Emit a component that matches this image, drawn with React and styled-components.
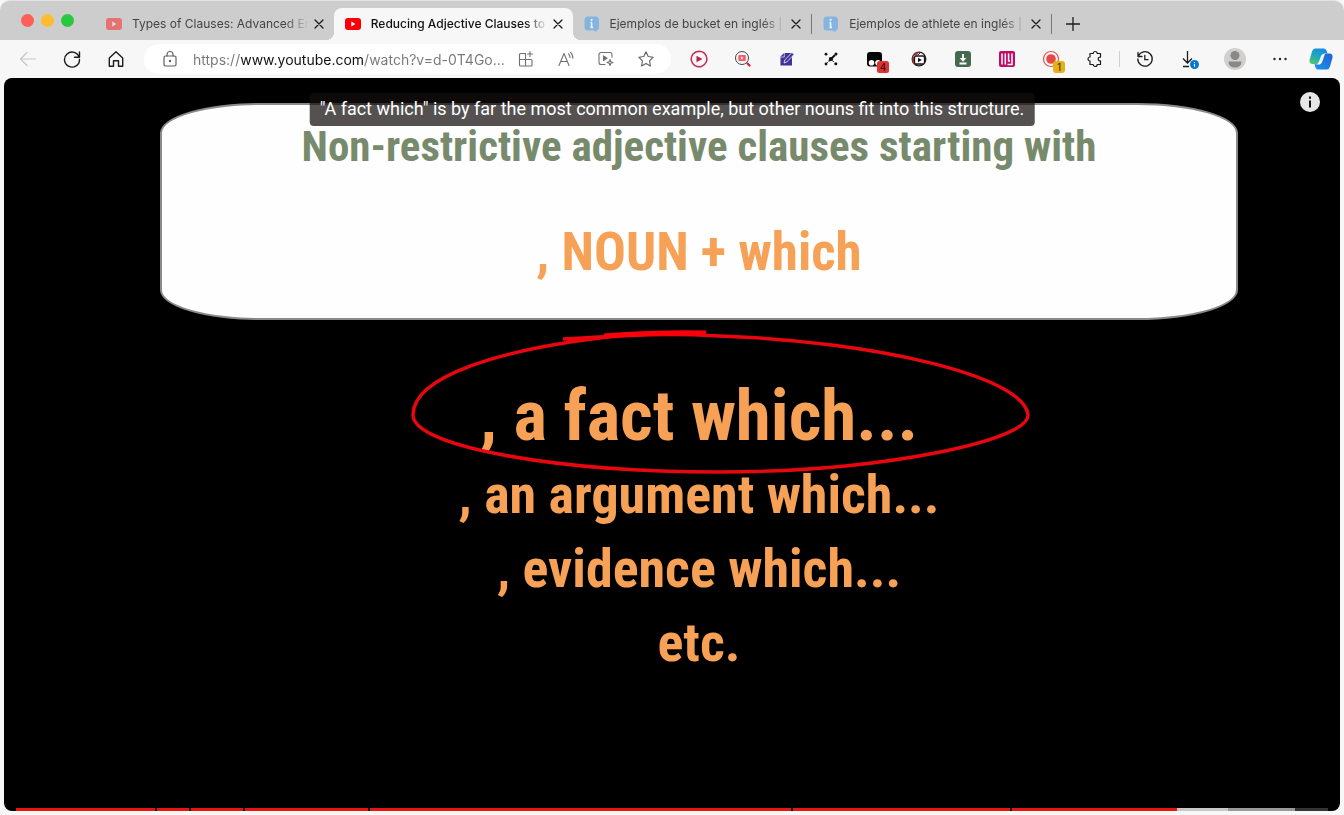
import React from "react";
import styled, { createGlobalStyle, css } from "styled-components";

const GlobalStyle = createGlobalStyle`
  * { box-sizing: border-box; }
  body { margin: 0; background: #f7f7f7; font-family: Inter, "Liberation Sans", sans-serif; }
  button, input { font: inherit; color: inherit; }
`;

const Window = styled.div`
  min-height: 100vh;
  display: flex;
  flex-direction: column;
  background: #f7f7f7;
`;

/* ---------- tab strip ---------- */

const TabStrip = styled.header`
  display: flex;
  align-items: flex-end;
  height: 40px;
  background: #cdcdcd;
  border-top: 1px solid #e4e4e4;
  border-radius: 10px 10px 0 0;
`;

const WindowControls = styled.div`
  display: flex;
  align-self: flex-start;
  gap: 7px;
  width: 95px;
  flex: none;
  padding: 13px 0 0 21px;
`;

const WindowControl = styled.button`
  width: 13px;
  height: 13px;
  padding: 0;
  border: 0;
  border-radius: 50%;
  background: ${(p) => p.$color};
`;

const Tabs = styled.nav`
  display: flex;
  flex: 0 1 957px;
  min-width: 0;
`;

const Tab = styled.div`
  position: relative;
  display: flex;
  align-items: center;
  flex: 1 1 0;
  min-width: 0;
  height: 32px;
  padding: 0 5px 0 11px;
  color: #444;
  ${(p) => p.$divided && css`border-right: 1px solid #777; height: 20px; margin: 6px 0;`}
  ${(p) =>
    p.$active &&
    css`
      color: #111;
      background: #f7f7f7;
      border-radius: 8px 8px 0 0;
      &::before, &::after {
        content: "";
        position: absolute;
        bottom: 0;
        width: 8px;
        height: 8px;
      }
      &::before {
        left: -8px;
        background: radial-gradient(circle at 0 0, #cdcdcd 8px, #f7f7f7 8px);
      }
      &::after {
        right: -8px;
        background: radial-gradient(circle at 100% 0, #cdcdcd 8px, #f7f7f7 8px);
      }
    `}
`;

const TabLink = styled.a`
  display: flex;
  align-items: center;
  flex: 1;
  min-width: 0;
  gap: 10px;
  color: inherit;
  text-decoration: none;
  svg { flex: none; }
`;

const TabTitle = styled.span`
  flex: 1;
  min-width: 0;
  overflow: hidden;
  white-space: nowrap;
  font-size: 12px;
  font-weight: ${(p) => (p.$active ? 500 : 400)};
  line-height: 20px;
  mask-image: linear-gradient(to right, #000 calc(100% - 24px), transparent);
`;

const IconButton = styled.button`
  display: flex;
  align-items: center;
  justify-content: center;
  flex: none;
  width: ${(p) => p.$width}px;
  height: 32px;
  padding: 0;
  border: 0;
  background: none;
`;

/* ---------- toolbar ---------- */

const Toolbar = styled.div`
  display: flex;
  align-items: center;
  height: 38px;
  padding: 0 4px 0 6px;
`;

const AddressBar = styled.div`
  display: flex;
  align-items: center;
  flex: 1;
  min-width: 0;
  height: 30px;
  margin: 0 6px;
  padding: 0 5px 0 14px;
  border-radius: 15px;
  background: #fff;
`;

const Address = styled.input`
  flex: 1;
  min-width: 0;
  height: 24px;
  margin-left: 11px;
  padding: 0;
  border: 0;
  outline: 0;
  font-size: 14px;
  color: transparent;
  background: linear-gradient(to right, #777 47px, #111 47px, #111 170px, #777 170px);
  background-clip: text;
  -webkit-background-clip: text;
`;

const Divider = styled.span`
  width: 1px;
  height: 16px;
  margin: 0 2px;
  background: #d0d0d0;
`;

/* ---------- video ---------- */

const Player = styled.main`
  position: relative;
  display: flex;
  flex-direction: column;
  flex: 1;
  margin: 0 4px 4px;
  overflow: hidden;
  border-radius: 8px;
  background: #000;
`;

const Caption = styled.p`
  position: absolute;
  z-index: 1;
  top: 15px;
  left: 50%;
  transform: translateX(-50%);
  margin: 0;
  padding: 0 10px 1px;
  border-radius: 4px;
  background: rgba(20, 14, 14, 0.72);
  color: #fff;
  font: 18px/32px Roboto, sans-serif;
  white-space: nowrap;
`;

const InfoButton = styled.button`
  position: absolute;
  top: 14px;
  right: 20px;
  width: 20px;
  height: 20px;
  padding: 0;
  border: 0;
  background: none;
`;

const Slide = styled.section`
  flex: 1;
  padding: 25px 102px 0 156px;
  text-align: center;
  font-family: "Roboto Condensed", Roboto, sans-serif;
  font-weight: 700;
  color: #f6a155;
`;

const Card = styled.div`
  padding: 11px 0 36px;
  border: 2px solid #8a8a8a;
  border-radius: 100px / 30px;
  background: #fefefe;
`;

const CardTitle = styled.h1`
  margin: 0 0 46px;
  color: #788a6c;
  font-size: 43px;
  line-height: 60px;
  white-space: nowrap;
`;

const Pattern = styled.p`
  margin: 0;
  font-size: 53px;
  line-height: 60px;
`;

const Examples = styled.ul`
  margin: 54px 0 0;
  padding: 0;
  list-style: none;
`;

const Example = styled.li`
  position: relative;
  font-size: ${(p) => (p.$large ? 71 : 54)}px;
  line-height: ${(p) => (p.$large ? 84 : 74)}px;
  white-space: nowrap;
`;

const Circle = styled.svg`
  position: absolute;
  top: -47px;
  left: calc(50% - 290px);
`;

const Progress = styled.div`
  display: flex;
  gap: 2px;
  height: 3px;
  margin: 0 12px;
`;

const Chapter = styled.span`
  display: flex;
  flex: ${(p) => p.$length} 1 0;
  background: #e8150f;
`;

const Part = styled.span`
  flex: ${(p) => p.$length} 1 0;
  background: ${(p) => p.$color};
`;

/* ---------- icons ---------- */

const Line = ({ size = 20, box = 20, width = 1.2, color = "#1c1c1c", children }) => (
  <svg width={size} height={size} viewBox={`0 0 ${box} ${box}`} fill="none" stroke={color}
    strokeWidth={width} strokeLinecap="round" strokeLinejoin="round" aria-hidden="true">
    {children}
  </svg>
);

const YouTubeIcon = ({ faded }) => (
  <svg width="16" height="16" viewBox="0 0 16 16" aria-hidden="true">
    <rect y="2" width="16" height="12" rx="3" fill={faded ? "#e57373" : "#fb0007"} />
    <path d="M6.3 5.6v4.8L10.4 8z" fill={faded ? "#f5dede" : "#fff"} />
  </svg>
);

const InfoBubbleIcon = () => (
  <svg width="16" height="16" viewBox="0 0 16 16" aria-hidden="true">
    <path d="M4 .5h7q4 0 4 4v6.500q0 3-2.500 3.500v1.500l-3-1.500H4q-3.500 0-3.500-3.500V4.500q0-4 3.500-4z" fill="#85b4df" />
    <path d="M7.600 6.500v5M6.500 6.500h1.200M6.500 11.500h2.600" stroke="#eaf4ff" strokeWidth="1.600" />
    <circle cx="7.600" cy="3.800" r="1.100" fill="#eaf4ff" />
  </svg>
);

const CloseIcon = () => (
  <Line size={10} box={10} width={1.3}><path d="m1 1 8 8M9 1 1 9" /></Line>
);

const extensions = [
  ["Play", (
    <svg width="18" height="18" viewBox="0 0 18 18">
      <path d="M9 1.200a7.800 7.800 0 1 0 7 4.300M9 1.200a7.800 7.800 0 0 1 7.400 5.400" fill="none" stroke="#c22956" strokeWidth="1.500" />
      <path d="M6.500 5.800v6.400L12.500 9z" fill="#c01f50" />
    </svg>
  )],
  ["Video search", (
    <svg width="18" height="18" viewBox="0 0 18 18">
      <circle cx="8" cy="8" r="6.500" fill="#fdf5f5" stroke="#3b4650" strokeWidth="1" />
      <rect x="4.300" y="5" width="7.500" height="6" rx="1" fill="#f0626b" />
      <path d="M7 6.500v3L9.500 8z" fill="#fff" />
      <path d="m13.500 13.500 2 2" stroke="#d42a3c" strokeWidth="2.400" strokeLinecap="round" />
    </svg>
  )],
  ["Notes", (
    <svg width="16" height="16" viewBox="0 0 16 16">
      <path d="M1.500 5.500 5 2h8v12.500H1.500z" fill="#3f3398" />
      <path d="m5 12 .8-3L13 1.500 15 3.500 7.800 11z" fill="#3f3398" stroke="#f7f7f7" strokeWidth=".8" />
      <path d="M1.500 6H5.300V2" stroke="#f7f7f7" fill="none" strokeWidth=".7" />
    </svg>
  )],
  ["Network", (
    <svg width="14" height="14" viewBox="0 0 14 14" fill="#111" stroke="#111">
      <path d="m5 9 6-6" strokeWidth="2" />
      <path d="m2.500 11.500 2-2M5 5.500l5 4.500" strokeWidth=".8" />
      <g stroke="none"><circle cx="2" cy="2.200" r="1.400" /><circle cx="12" cy="2" r="1.500" /><circle cx="7" cy="7" r="2" /><circle cx="2" cy="12" r="1.400" /><circle cx="11.800" cy="11.800" r="1.500" /></g>
    </svg>
  )],
  ["Scripts", (
    <svg width="28" height="28" viewBox="0 0 28 28">
      <rect x="6" y="7" width="15" height="14.500" rx="3" fill="#050505" />
      <circle cx="10.500" cy="17.700" r="2.800" fill="#fff" /><circle cx="17" cy="17.700" r="2.800" fill="#fff" />
      <rect x="16" y="16" width="12" height="12" rx="2.500" fill="#db3433" />
      <text x="22" y="25.800" textAnchor="middle" fontSize="10" fill="#300">4</text>
    </svg>
  )],
  ["Video recorder", (
    <svg width="16" height="16" viewBox="0 0 16 16">
      <circle cx="8" cy="8" r="6.800" fill="#fff" stroke="#222" strokeWidth="1.300" />
      <path d="M2 5q3-4 6-4L6 4.500H3zM1.500 6v6l2 1V6z" fill="#c53041" />
      <rect x="3.500" y="5" width="10" height="8" rx="1.500" fill="#fff" stroke="#171717" strokeWidth="1.300" />
      <path d="M7 6.800v4.500l3.800-2.300z" fill="#111" /><path d="m7 4 3-3" stroke="#222" />
    </svg>
  )],
  ["Save", (
    <svg width="16" height="16" viewBox="0 0 16 16">
      <rect width="16" height="16" rx="3" fill="#46694d" />
      <path d="M8 3v6M4.500 12.500h7" stroke="#fff" strokeWidth="1.800" /><path d="M4.700 7h6.600L8 10.800z" fill="#fff" />
    </svg>
  )],
  ["Reader", (
    <svg width="16" height="16" viewBox="0 0 16 16">
      <rect width="16" height="16" rx="2" fill="#c00b68" />
      <path d="M3 2.500v11M6.300 2.500v11M9.600 2.500v7.500h1.500M13 2.500v11H8.500" fill="none" stroke="#fff" strokeWidth="1.500" />
    </svg>
  )],
  ["Recorder", (
    <svg width="28" height="28" viewBox="0 0 28 28">
      <circle cx="14" cy="14" r="7.500" fill="none" stroke="#e35353" strokeWidth="1.200" />
      <circle cx="14" cy="14" r="4.800" fill="#e84747" />
      <rect x="16" y="16" width="12" height="12" rx="3" fill="#e5b116" />
      <text x="22" y="25.800" textAnchor="middle" fontSize="10" fill="#332600">1</text>
    </svg>
  )],
  ["Extensions", (
    <Line size={18} box={18}>
      <path d="M5 3.500h2.200a2 2 0 0 1 4 0h3.300v3.700a1.900 1.900 0 1 0 0 3.700v3.600h-3.300a2 2 0 0 1-4 0H4v-3.500a2 2 0 0 1 0-4V3.500z" />
    </Line>
  )],
];

const pageActions = [
  ["Add to apps", (
    <Line size={18} box={18} width={1.1} color="#707070">
      <path d="M8 3.500H3.500a1 1 0 0 0-1 1V15a1 1 0 0 0 1 1H14a1 1 0 0 0 1-1v-4.500a1 1 0 0 0-1-1H2.500M8.500 3.500V16M13 1.500v5M10.500 4h5" />
    </Line>
  )],
  ["Read aloud", (
    <Line size={18} box={18} width={1.1} color="#707070">
      <path d="m2 15.500 5-12 5 12M3.700 11.500h6.600M11.500 3.800q1.500 1.500 1.500 3.700M13.500 2.300q2.500 2.200 2.300 6" />
    </Line>
  )],
  ["Enhance video", (
    <Line size={18} box={18} width={1.1} color="#707070">
      <path d="M8 14.500H4a2 2 0 0 1-2-2v-8a2 2 0 0 1 2-2h9a2 2 0 0 1 2 2V7M13 9.500l.8 2.200 2.200.8-2.200.8-.8 2.200-.8-2.200-2.200-.8 2.200-.8z" />
      <path d="M6.500 6v4.500l3.500-2.200z" fill="#707070" />
    </Line>
  )],
  ["Favorite", (
    <Line size={18} box={18} width={1.1} color="#606060">
      <path d="m9 1.800 2.200 4.700 5 .7-3.600 3.600.8 5.200L9 13.500 4.600 16l.8-5.200L1.800 7.200l5-.7z" />
    </Line>
  )],
];

const browserActions = [
  ["History", (
    <Line size={18} box={18} width={1.3}><path d="M2 2.500v4h4M2.300 6.300A7.200 7.200 0 1 1 1.800 9M8.800 5.500v4.200h3.200" /></Line>
  )],
  ["Downloads", (
    <svg width="22" height="22" viewBox="0 0 22 22">
      <path d="M8.500 3v12M4 10.500l4.500 4.500 4.500-4.500M4 18.500h6" fill="none" stroke="#1c1c1c" strokeWidth="1.300" />
      <circle cx="15.500" cy="16.500" r="4.500" fill="#0877d1" />
      <path d="M15.500 15.800v3M15.500 14v1" stroke="#fff" strokeWidth="1.100" />
    </svg>
  )],
  ["Profile", (
    <svg width="22" height="22" viewBox="0 0 22 22">
      <circle cx="11" cy="11" r="11" fill="#d2d0ce" /><circle cx="11" cy="7.500" r="4.500" fill="#8a8886" />
      <path d="M4.500 13.500h13q0 6-6.500 6t-6.500-6z" fill="#8a8886" />
    </svg>
  )],
  ["Settings", (
    <svg width="14" height="4" viewBox="0 0 14 4" fill="#222"><circle cx="1.500" cy="2" r="1.200" /><circle cx="7" cy="2" r="1.200" /><circle cx="12.500" cy="2" r="1.200" /></svg>
  )],
];

const CopilotIcon = () => (
  <svg width="24" height="22" viewBox="0 0 24 22" aria-hidden="true">
    <defs>
      <linearGradient id="copilotLeft" x1="0" y1="1" x2=".5" y2="0"><stop offset="0" stopColor="#69c75b" /><stop offset=".45" stopColor="#20b0b0" /><stop offset="1" stopColor="#1690df" /></linearGradient>
      <linearGradient id="copilotRight" x1="0" y1="1" x2="1" y2="0"><stop offset="0" stopColor="#1596ed" /><stop offset="1" stopColor="#2460cf" /></linearGradient>
    </defs>
    <path d="M6 .5h9q2 0 2.700 2.500l.8 2.500q-4-1-5.200 2.500L11.500 13q-1 3-3.500 3H3q-3-.5-2.500-4L3 3.500Q4 .5 6 .5z" fill="url(#copilotLeft)" />
    <path d="M18 21.500H9q-2 0-2.700-2.500L5.500 16q4.500.8 5.700-2.500L13 8.500q1-3 3.500-3H21q3 .5 2.500 4L21 18.500q-1 3-3 3z" fill="url(#copilotRight)" />
    <path d="M16.500 5.500q-3.500-.5-4.500 2.500l-2 5.500q-.8 2.500-3 2.800 3 .7 4.500-.2 1.200-.8 1.800-2.600l1.700-5q.6-2.400 1.500-3z" fill="#f7f7f7" />
  </svg>
);

const tabs = [
  { title: "Types of Clauses: Advanced En", icon: <YouTubeIcon faded /> },
  { title: "Reducing Adjective Clauses to", icon: <YouTubeIcon />, active: true },
  { title: "Ejemplos de bucket en inglés |", icon: <InfoBubbleIcon />, divided: true },
  { title: "Ejemplos de athlete en inglés |", icon: <InfoBubbleIcon />, divided: true },
];

const watchedChapters = [139, 32, 52, 123, 421, 217];

export default function App() {
  return (
    <Window>
      <GlobalStyle />
      <TabStrip>
        <WindowControls>
          <WindowControl $color="#ff5f57" aria-label="Close window" />
          <WindowControl $color="#febc2e" aria-label="Minimize window" />
          <WindowControl $color="#28c840" aria-label="Zoom window" />
        </WindowControls>
        <Tabs aria-label="Tabs">
          {tabs.map((tab) => (
            <Tab key={tab.title} $active={tab.active} $divided={tab.divided}>
              <TabLink href="#">
                {tab.icon}
                <TabTitle $active={tab.active}>{tab.title}</TabTitle>
              </TabLink>
              <IconButton $width={20} aria-label="Close tab"><CloseIcon /></IconButton>
            </Tab>
          ))}
        </Tabs>
        <IconButton $width={42} aria-label="New tab">
          <Line size={14} box={14} width={1.3}><path d="M7 .5v13M.5 7h13" /></Line>
        </IconButton>
      </TabStrip>

      <Toolbar>
        <IconButton $width={44} aria-label="Back" disabled>
          <Line size={18} box={18} color="#c8c8c8"><path d="M16.500 9h-15M8 2.500 1.500 9 8 15.500" /></Line>
        </IconButton>
        <IconButton $width={44} aria-label="Reload">
          <Line size={18} box={18} width={1.400}><path d="M16.200 7.500A7.500 7.500 0 1 0 16.500 9.500M16.500 2v5.200h-5" /></Line>
        </IconButton>
        <IconButton $width={44} aria-label="Home">
          <Line size={18} box={18} width={1.400}><path d="M2.300 8 9 1.800 15.700 8v8.200h-4.200v-5.500h-5v5.500H2.300z" /></Line>
        </IconButton>
        <AddressBar>
          <IconButton $width={24} aria-label="Site information">
            <Line size={18} box={18} color="#606060">
              <rect x="3" y="6" width="12" height="10" rx="1.500" />
              <path d="M6 6V4.500a3 3 0 0 1 6 0V6" />
              <circle cx="9" cy="11" r=".6" fill="#606060" />
            </Line>
          </IconButton>
          <Address aria-label="Address" defaultValue="https://www.youtube.com/watch?v=d-0T4Go..." />
          {pageActions.map(([label, icon]) => (
            <IconButton key={label} $width={40} aria-label={label}>{icon}</IconButton>
          ))}
        </AddressBar>
        {extensions.map(([label, icon]) => (
          <IconButton key={label} $width={44} aria-label={label}>{icon}</IconButton>
        ))}
        <Divider />
        {browserActions.map(([label, icon]) => (
          <IconButton key={label} $width={45} aria-label={label}>{icon}</IconButton>
        ))}
        <IconButton $width={38} aria-label="Copilot"><CopilotIcon /></IconButton>
      </Toolbar>

      <Player>
        <Caption>"A fact which" is by far the most common example, but other nouns fit into this structure.</Caption>
        <InfoButton aria-label="Info">
          <svg width="20" height="20" viewBox="0 0 20 20">
            <circle cx="10" cy="10" r="10" fill="#e6e6e6" />
            <path d="M10 8.500v7M10 4.500v2.200" stroke="#111" strokeWidth="2" />
          </svg>
        </InfoButton>
        <Slide>
          <Card>
            <CardTitle>Non-restrictive adjective clauses starting with</CardTitle>
            <Pattern>, NOUN + which</Pattern>
          </Card>
          <Examples>
            <Example $large>
              , a fact which...
              <Circle width="622" height="150" viewBox="0 0 622 150" fill="none" stroke="#e8060f" strokeWidth="3.500" aria-hidden="true">
                <path d="M154 12C225 8 255 6 310 9C460 14 615 48 619 88C620 114 470 145 310 145C150 145 4 120 4 88C4 50 88 22 208 9Q250 5 297 6" />
                <path d="M195 9Q250 5 297 6" stroke="#fb0008" strokeWidth="5" />
              </Circle>
            </Example>
            <Example>, an argument which...</Example>
            <Example>, evidence which...</Example>
            <Example>etc.</Example>
          </Examples>
        </Slide>
        <Progress>
          {watchedChapters.map((length) => <Chapter key={length} $length={length} />)}
          <Chapter $length={316}>
            <Part $length={165} $color="#e8150f" />
            <Part $length={51} $color="#c8c8c8" />
            <Part $length={67} $color="#999" />
            <Part $length={33} $color="#333" />
          </Chapter>
        </Progress>
      </Player>
    </Window>
  );
}
